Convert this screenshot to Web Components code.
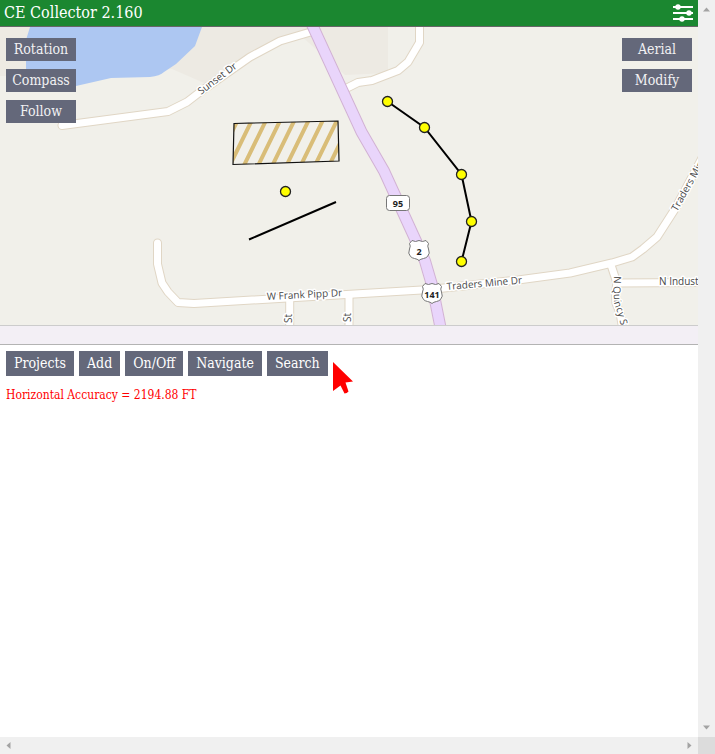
<!DOCTYPE html>
<html lang="en">
<head>
<meta charset="utf-8">
<title>CE Collector</title>
<style>
body {
    margin: 0;
    font-family: "DejaVu Serif Condensed", "DejaVu Serif", serif;
}
</style>
</head>
<body>
<collector-app>
    <app-header slot="header">CE Collector 2.160</app-header>
    <site-map slot="map">
        <flat-button slot="left" class="map">Rotation</flat-button>
        <flat-button slot="left" class="map">Compass</flat-button>
        <flat-button slot="left" class="map">Follow</flat-button>
        <flat-button slot="right" class="map">Aerial</flat-button>
        <flat-button slot="right" class="map">Modify</flat-button>
    </site-map>
    <split-bar slot="map"></split-bar>
    <tool-bar>
        <flat-button>Projects</flat-button>
        <flat-button>Add</flat-button>
        <flat-button>On/Off</flat-button>
        <flat-button>Navigate</flat-button>
        <flat-button>Search</flat-button>
    </tool-bar>
    <status-line>Horizontal Accuracy = 2194.88 FT</status-line>
</collector-app>

<script>
class CollectorApp extends HTMLElement {
    constructor() {
        super();
        this.attachShadow({mode:'open'});
        this.shadowRoot.innerHTML = `
        <style>
        :host {
            display: grid;
            grid-template-columns: minmax(0, 1fr) 17px;
            grid-template-rows: minmax(0, 1fr) 17px;
            height: 100vh;
        }
        main {
            overflow: hidden;
            background: #fff;
        }
        .corner {
            background: #dcdcdc;
        }
        </style>
        <main>
            <slot name="header"></slot>
            <slot name="map"></slot>
            <slot></slot>
        </main>
        <scroll-track></scroll-track>
        <scroll-track class="across"></scroll-track>
        <div class="corner"></div>
        `;
    }
}
customElements.define('collector-app', CollectorApp)

class ScrollTrack extends HTMLElement {
    constructor() {
        super();
        this.attachShadow({mode:'open'});
        this.shadowRoot.innerHTML = `
        <style>
        :host {
            display: flex;
            flex-direction: column;
            justify-content: space-between;
            align-items: center;
            padding: 6px 0;
            background: #f0f0f0;
        }
        :host(.across) {
            flex-direction: row;
            padding: 0 5px;
        }
        svg {
            display: block;
            width: 7px;
            height: 7px;
            fill: #a3a3a3;
        }
        :host(.across) svg {
            transform: rotate(-90deg);
        }
        </style>
        <svg viewBox="0 0 7 7"><path d="M0 5.5 3.5 1.5 7 5.5z"/></svg>
        <svg viewBox="0 0 7 7"><path d="M0 1.5 3.5 5.5 7 1.5z"/></svg>
        `;
    }
}
customElements.define('scroll-track', ScrollTrack)

class AppHeader extends HTMLElement {
    constructor() {
        super();
        this.attachShadow({mode:'open'});
        this.shadowRoot.innerHTML = `
        <style>
        :host {
            display: flex;
            justify-content: space-between;
            align-items: center;
            height: 26px;
            padding: 0 4px;
            background: #1b8730;
            border-bottom: 1px solid #666;
            color: #fff;
        }
        h1 {
            margin: 0;
            font-size: 16px;
            line-height: 26px;
            font-weight: normal;
        }
        button {
            display: block;
            padding: 0;
            border: 0;
            background: none;
        }
        svg {
            display: block;
        }
        </style>
        <h1><slot></slot></h1>
        <button type="button" aria-label="Settings">
            <svg width="22" height="20" viewBox="0 0 22 20" fill="#fff">
                <path d="M1 3h20v2H1zM1 9h20v2H1zM1 15h20v2H1z"/>
                <circle cx="6" cy="4" r="2.7"/>
                <circle cx="17" cy="10" r="2.7"/>
                <circle cx="10" cy="16" r="2.7"/>
            </svg>
        </button>
        `;
    }
}
customElements.define('app-header', AppHeader)

class FlatButton extends HTMLElement {
    constructor() {
        super();
        this.attachShadow({mode:'open'});
        this.shadowRoot.innerHTML = `
        <style>
        :host {
            display: block;
        }
        button {
            display: block;
            height: 25px;
            padding: 0 8px 2px;
            border: 0;
            background: #64687a;
            color: #fff;
            font-family: inherit;
            font-size: 14px;
            white-space: nowrap;
        }
        :host(.map) button {
            width: 70px;
            height: 23px;
            padding: 0 0 2px;
            color: #f1f1f3;
        }
        button:hover {
            background: #4d5163;
        }
        </style>
        <button type="button"><slot></slot></button>
        `;
    }
}
customElements.define('flat-button', FlatButton)

class SiteMap extends HTMLElement {
    constructor() {
        super();
        this.attachShadow({mode:'open'});
        this.shadowRoot.innerHTML = `
        <style>
        :host {
            display: block;
            position: relative;
            height: 298px;
            overflow: hidden;
            background: #f1f0ea;
        }
        svg {
            display: block;
            width: 100%;
            height: 100%;
        }
        .left, .right {
            position: absolute;
            top: 11px;
            display: flex;
            flex-direction: column;
            gap: 8px;
        }
        .left { left: 6px; }
        .right { right: 6px; }
        .edge, .road {
            fill: none;
            stroke-linecap: round;
            stroke-linejoin: round;
        }
        .edge {
            stroke: #e0d6c5;
            stroke-width: 9px;
        }
        .road {
            stroke: #fff;
            stroke-width: 7px;
        }
        .hwy-edge {
            fill: none;
            stroke: #d2b2d4;
            stroke-width: 12px;
        }
        .hwy {
            fill: none;
            stroke: #e9d5fb;
            stroke-width: 10px;
        }
        .label {
            font-family: "Open Sans", "Noto Sans", sans-serif;
            font-size: 10px;
            fill: #484848;
            stroke: #fff;
            stroke-width: 3px;
            stroke-linejoin: round;
            paint-order: stroke;
        }
        .shield {
            fill: #fff;
            stroke: #777;
        }
        .route {
            font-family: "Open Sans", "Noto Sans", sans-serif;
            font-size: 9px;
            font-weight: bold;
            fill: #222;
            text-anchor: middle;
        }
        .hatch {
            stroke: #d9bd78;
            stroke-width: 4px;
        }
        .track {
            fill: none;
            stroke: #000;
            stroke-width: 2px;
        }
        .node {
            fill: #ff0;
            stroke: #222;
            stroke-width: 1.3px;
        }
        </style>
        <svg viewBox="0 27 698 298" preserveAspectRatio="xMidYMid slice">
            <defs>
                <path id="sunset" d="M62 125.500 168 111.500 187 102 200 92 240 64 250 57 280 41 314 31"/>
                <path id="spur" d="M346 88.500 358 82.500 372 80.500 398 70.500 408 62 419.500 42.500V20"/>
                <path id="mine" d="M157.500 243V264L162 283 168 292 178 302.500 194 303.500 430 289.500 518 280 570 273 612 263 632 257 643 249 657 237 675 209 702 158"/>
                <path id="quincy" d="M611 265 617 283 615.500 292 616 303 620 313 623 330"/>
                <path id="indust" d="M617 283 705 282.500"/>
                <path id="st1" d="M289.700 300V330"/>
                <path id="st2" d="M349 296V330"/>
                <path id="highway" d="M309 18 361.500 132 384 171 416 241 425 261 432 285 441 330"/>
                <path id="us" d="M-7-9.500Q-3.500-7.500 0-9.500 3.500-7.500 7-9.500L9.500-6.500Q8-4 9.500-1 11.500 3.500 8.500 6.500 7 8 4.500 8.500 1.500 9 0 10.500-1.500 9-4.500 8.500-7 8-8.500 6.500-11.500 3.500-9.500-1-8-4-9.500-6.500z"/>
                <path id="quincyText" d="M614 276 613.500 290 614 303 617.500 313 622 330"/>
                <clipPath id="lot"><path d="M234 123.500 338 121 339 161 233 164.500z"/></clipPath>
            </defs>
            <path fill="#edeae3" d="M0 27H388V73L345 75 300 35 240 66 211 86 172 69 26 76H0z"/>
            <path fill="#adc7f2" d="M30 27 26 40V69Q34 86 50 90L76 86 111 78 150 77Q160 76 164 72L176 64 195 46 202 27z"/>
            <g class="edge">
                <use href="#st1"/><use href="#st2"/><use href="#quincy"/><use href="#indust"/>
                <use href="#sunset"/><use href="#spur"/><use href="#mine"/>
            </g>
            <g class="road">
                <use href="#st1"/><use href="#st2"/><use href="#quincy"/><use href="#indust"/>
                <use href="#sunset"/><use href="#spur"/><use href="#mine"/>
            </g>
            <use href="#highway" class="hwy-edge"/>
            <use href="#highway" class="hwy"/>

            <g class="label">
                <text transform="translate(201 95) rotate(-37)">Sunset Dr</text>
                <text transform="translate(267 300) rotate(-3)">W Frank Pipp Dr</text>
                <text transform="translate(447 290) rotate(-5)">Traders Mine Dr</text>
                <text transform="translate(677 212) rotate(-61)">Traders Min</text>
                <text x="659" y="285">N Indust</text>
                <text><textPath href="#quincyText">N Quincy S</textPath></text>
                <text transform="translate(292 323) rotate(-90)">St</text>
                <text transform="translate(351 322) rotate(-90)">St</text>
            </g>

            <rect class="shield" x="386.500" y="195.500" width="23" height="15" rx="3"/>
            <text class="route" x="398" y="207">95</text>
            <use href="#us" class="shield" x="419" y="250"/>
            <text class="route" x="419" y="255">2</text>
            <use href="#us" class="shield" x="432" y="293"/>
            <text class="route" x="432" y="298">141</text>

            <g class="hatch" clip-path="url(#lot)"></g>
            <path d="M234 123.500 338 121 339 161 233 164.500z" fill="none" stroke="#111" stroke-width="1.200"/>
            <path class="track" d="M249 239.500 336 202"/>
            <path class="track" d="M387.500 101.500 424.500 127.500 461.500 174.500 471.500 221.500 461.500 261.500"/>
            <g class="nodes"></g>
        </svg>
        <div class="left"><slot name="left"></slot></div>
        <div class="right"><slot name="right"></slot></div>
        `;
        this.drawHatch();
        this.drawNodes();
    }

    drawHatch() {
        let d = '';
        for (let i = -1; i < 8; i++) {
            const x = 252 + i * 14.2;
            d += `M${x} 120L${x - 22.5} 166`;
        }
        this.shadowRoot.querySelector('.hatch').innerHTML = `<path d="${d}"/>`;
    }

    drawNodes() {
        const points = [[285.5,191.5],[387.5,101.5],[424.5,127.5],[461.5,174.5],[471.5,221.5],[461.5,261.5]];
        this.shadowRoot.querySelector('.nodes').innerHTML = points
            .map(([x, y]) => `<circle class="node" cx="${x}" cy="${y}" r="5"/>`)
            .join('');
    }
}
customElements.define('site-map', SiteMap)

class SplitBar extends HTMLElement {
    constructor() {
        super();
        this.attachShadow({mode:'open'});
        this.shadowRoot.innerHTML = `
        <style>
        :host {
            display: block;
            height: 18px;
            background: #f3eff5;
            border-top: 1px solid #ccc;
            border-bottom: 1px solid #b3b3b3;
        }
        </style>
        `;
    }
}
customElements.define('split-bar', SplitBar)

class ToolBar extends HTMLElement {
    constructor() {
        super();
        this.attachShadow({mode:'open'});
        this.shadowRoot.innerHTML = `
        <style>
        :host {
            display: flex;
            align-items: flex-start;
            gap: 5px;
            padding: 6px 6px 0;
        }
        svg {
            display: block;
            margin-top: 11px;
        }
        </style>
        <slot></slot>
        <svg width="20" height="32" viewBox="0 0 20 32" fill="#f00">
            <path d="M0 0 20 19.500 12.500 20.500 15.500 29.500Q14 31.500 11.500 31.500L7.500 23.500 0 29z"/>
        </svg>
        `;
    }
}
customElements.define('tool-bar', ToolBar)

class StatusLine extends HTMLElement {
    constructor() {
        super();
        this.attachShadow({mode:'open'});
        this.shadowRoot.innerHTML = `
        <style>
        :host {
            display: block;
            margin-top: -7px;
            padding: 0 6px;
            color: #f00;
            font-size: 12px;
            line-height: 16px;
        }
        </style>
        <slot></slot>
        `;
    }
}
customElements.define('status-line', StatusLine)
</script>
</body>
</html>
